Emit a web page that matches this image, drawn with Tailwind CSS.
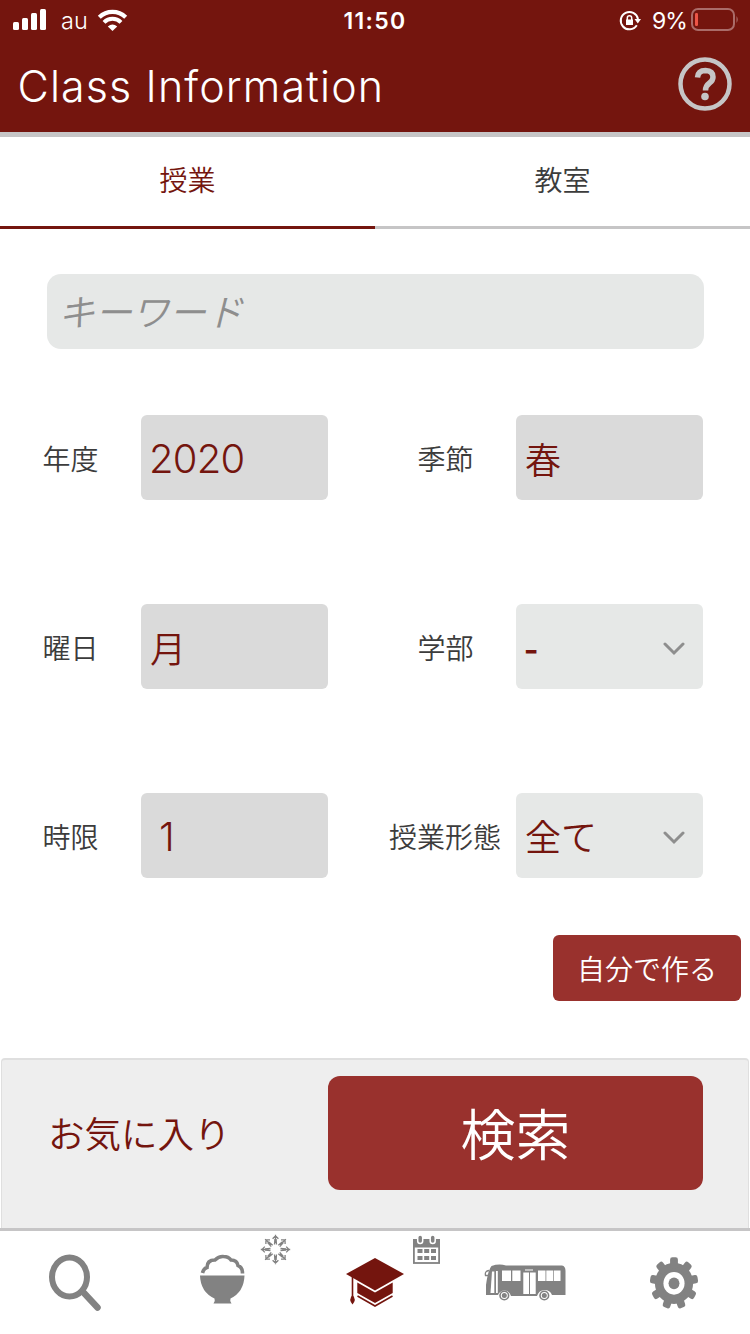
<!DOCTYPE html>
<html lang="ja">
<head>
<meta charset="utf-8">
<title>Class Information</title>
<script src="https://cdn.jsdelivr.net/npm/@tailwindcss/browser@4"></script>
</head>
<body class="w-[750px] h-[1334px] flex flex-col overflow-hidden bg-white font-[350] text-[#3c3c3c] font-['Noto_Sans_CJK_JP',sans-serif]">
<header class="h-[137px] shrink-0 bg-[#74150e] border-b-[5px] border-[#c6c5c6] flex flex-col text-white">
  <div class="h-10 flex items-center justify-between font-['Inter',sans-serif] font-normal">
    <div class="w-[250px] flex items-center">
      <svg class="w-[50px] h-10 shrink-0" viewBox="0 0 50 40" fill="#fff"><rect x="13" y="22" width="6" height="8" rx="1.5"/><rect x="22" y="18" width="6" height="12" rx="1.5"/><rect x="31" y="13" width="6" height="17" rx="1.5"/><rect x="40" y="9" width="6" height="21" rx="1.5"/></svg>
      <span class="w-[46px] pl-[11px] text-[23.5px] font-[350] leading-10 pt-[2px]">au</span>
      <svg class="w-[34px] h-10" viewBox="96 0 34 40" fill="none" stroke="#fff" stroke-width="4.2"><path d="M99.300 17.300A19 19 0 0 1 125.700 17.300"/><path d="M104 22.400A12 12 0 0 1 121 22.400" stroke-width="4"/><path d="M107.800 26.500Q112.500 22.600 117.200 26.500L112.500 31Z" fill="#fff" stroke="none"/></svg>
    </div>
    <span class="text-[23px] font-semibold tracking-[1.300px] leading-10 pt-[2px]">11:50</span>
    <div class="w-[250px] flex items-center justify-end">
      <svg class="w-[24px] h-10" viewBox="618 0 24 40" fill="none" stroke="#fff" stroke-width="2"><path d="M638 19A8.700 8.700 0 1 0 636.800 25.300"/><path d="M634.500 19h6.500l-3.200 4.500z" fill="#fff" stroke="none"/><rect x="626" y="19.500" width="7" height="5.500" fill="#fff" stroke="none"/><path d="M627.300 20v-2a2.200 2.200 0 0 1 4.400 0v2" stroke-width="1.500"/></svg>
      <span class="w-[49px] pl-[10px] text-[23px] leading-10 pt-[2px] whitespace-nowrap tracking-[-1px]">9%</span>
      <svg class="w-[59px] h-10" viewBox="691 0 59 40"><rect x="692" y="9" width="42" height="21" rx="6" fill="none" stroke="#aa6c69" stroke-width="2"/><rect x="695" y="13" width="3" height="13" rx="1.200" fill="#ec5547"/><path d="M736.500 16q2.500 3.500 0 7z" fill="#aa6c69"/></svg>
    </div>
  </div>
  <div class="flex-1 flex items-center justify-between pl-[17.5px] pr-[18px]">
    <h1 class="text-[43px] leading-none font-['Inter',sans-serif] font-light tracking-[1.100px] whitespace-nowrap">Class Information</h1>
    <svg class="w-[54px] h-[54px] -mt-1" viewBox="0 0 54 54" fill="none" stroke="#c6c5c6"><circle cx="27" cy="27" r="24.500" stroke-width="4.500"/><path d="M19.500 20.500Q20 13.500 27.500 13.500Q35 13.700 35 20Q35 23.500 31.500 26Q27.500 29 27.500 33.500" stroke-width="5.500"/><circle cx="27" cy="39.500" r="3.800" fill="#c6c5c6" stroke="none"/></svg>
  </div>
</header>
<nav class="h-[92px] shrink-0 grid grid-cols-2 text-[28px] text-center leading-[84px]">
  <div class="border-b-[3px] border-[#74150e] text-[#74150e]">授業</div>
  <div class="border-b-[3px] border-[#c6c5c6]">教室</div>
</nav>
<main class="h-[829px] shrink-0 pt-[45px] flex flex-col">
  <div class="ml-[47px] w-[657px] h-[75px] rounded-[14px] bg-[#e6e8e7] pl-[11px] text-[37px] leading-[73px] text-[#8e8e8e] italic">キーワード</div>
  <div class="mt-[66px] grid grid-cols-2 gap-y-[104px]">
    <div class="flex items-center h-[85px]"><div class="w-[141px] pr-[42.5px] text-right text-[28px]">年度</div><div class="w-[187px] h-[85px] rounded-[6px] bg-[#dadada] pl-[8px] text-[#74150e] text-[40px] leading-[87px] font-['Inter',sans-serif] font-[350] tracking-[-0.8px]">2020</div></div>
    <div class="flex items-center h-[85px]"><div class="w-[141px] pr-[42.5px] text-right text-[28px]">季節</div><div class="w-[187px] h-[85px] rounded-[6px] bg-[#dadada] pl-[9px] text-[#74150e] text-[36px] leading-[87px]">春</div></div>
    <div class="flex items-center h-[85px]"><div class="w-[141px] pr-[42.5px] text-right text-[28px]">曜日</div><div class="w-[187px] h-[85px] rounded-[6px] bg-[#dadada] pl-[9px] text-[#74150e] text-[36px] leading-[87px]">月</div></div>
    <div class="flex items-center h-[85px]"><div class="w-[141px] pr-[42.5px] text-right text-[28px]">学部</div><div class="w-[187px] h-[85px] rounded-[6px] bg-[#e6e8e7] pl-[8px] pr-[18px] text-[#74150e] text-[36px] leading-[87px] flex items-center justify-between"><span class="font-medium text-[40px]">-</span><svg class="w-[22px] h-[14px] mt-[4px]" viewBox="0 0 22 14" fill="none" stroke="#8e8e8e" stroke-width="3" stroke-linecap="round"><path d="M2 2L11 11L20 2"/></svg></div></div>
    <div class="flex items-center h-[85px]"><div class="w-[141px] pr-[42.5px] text-right text-[28px]">時限</div><div class="w-[187px] h-[85px] rounded-[6px] bg-[#dadada] pl-[18px] text-[#74150e] text-[40px] leading-[87px] font-['Inter',sans-serif] font-[350]">1</div></div>
    <div class="flex items-center h-[85px]"><div class="w-[141px] pr-[15px] text-right text-[28px] whitespace-nowrap">授業形態</div><div class="w-[187px] h-[85px] rounded-[6px] bg-[#e6e8e7] pl-[9px] pr-[18px] text-[#74150e] text-[36px] leading-[87px] flex items-center justify-between"><span>全て</span><svg class="w-[22px] h-[14px] mt-[4px]" viewBox="0 0 22 14" fill="none" stroke="#8e8e8e" stroke-width="3" stroke-linecap="round"><path d="M2 2L11 11L20 2"/></svg></div></div>
  </div>
  <div class="mt-[57px] mr-[9px] self-end w-[188px] h-[66px] rounded-[6px] bg-[#99312d] text-white text-[28px] leading-[66px] text-center">自分で作る</div>
</main>
<section class="mx-px h-[170px] shrink-0 rounded-t-[4px] border border-b-0 border-t-2 border-[#dfdfdf] bg-[#eee] flex pt-4 pl-[45px]">
  <div class="w-[281px] h-[114px] pl-px text-[36.500px] leading-[113px] text-[#74150e]">お気に入り</div>
  <div class="w-[375px] h-[114px] rounded-[12px] bg-[#99312d] text-white text-[55px] leading-[111px] text-center">検索</div>
</section>
<footer class="h-[106px] shrink-0 border-t-[3px] border-[#c6c5c6] flex">
  <svg class="w-[150px] h-[103px]" viewBox="0 1231 150 103" fill="none" stroke="#828282"><ellipse cx="69.500" cy="1277" rx="17.500" ry="19.500" stroke-width="6"/><path d="M84 1293L97.500 1307.500" stroke-width="6.500" stroke-linecap="round"/></svg>
  <svg class="w-[150px] h-[103px]" viewBox="150 1231 150 103" fill="none" stroke="#828282">
    <path d="M200 1275.500H244.500Q244 1292 230.500 1298.500Q229.500 1301 231.500 1303.500H213.500Q215.500 1301 214.500 1298.500Q200.500 1292 200 1275.500Z" fill="#828282" stroke="none"/>
    <path d="M202.500 1273Q203.500 1268.500 207 1267.500Q207 1260 215 1260Q219 1256 223.500 1256.500Q228.500 1256.500 231 1260Q237 1260 238 1265.500Q242.500 1267 242.500 1273.500" stroke-width="3.600"/>
    <g stroke-width="1.300"><g id="arm"><path d="M275.500 1243V1234.800M274.500 1244.500L274.900 1239M276.500 1244.500L276.100 1239M272.600 1238.800L275.500 1236L278.400 1238.800"/></g>
    <use href="#arm" transform="rotate(45 275.500 1249.500)"/><use href="#arm" transform="rotate(90 275.500 1249.500)"/><use href="#arm" transform="rotate(135 275.500 1249.500)"/><use href="#arm" transform="rotate(180 275.500 1249.500)"/><use href="#arm" transform="rotate(225 275.500 1249.500)"/><use href="#arm" transform="rotate(270 275.500 1249.500)"/><use href="#arm" transform="rotate(315 275.500 1249.500)"/></g>
  </svg>
  <svg class="w-[150px] h-[103px]" viewBox="300 1231 150 103" fill="#74150e">
    <path d="M375 1258L404 1274L375 1290.500L346 1274Z"/><path d="M357.300 1282.500L375 1292.500L392.700 1282.500V1293L375 1303L357.300 1293Z"/><path d="M357.500 1296L375 1306L392.500 1296" fill="none" stroke="#74150e" stroke-width="1.600"/><path d="M352.500 1277V1298" fill="none" stroke="#74150e" stroke-width="1.600"/><path d="M352.500 1295Q357 1299.500 352.500 1304.500Q348 1299.500 352.500 1295Z"/>
    <rect x="413.900" y="1240.500" width="25.200" height="22.500" fill="none" stroke="#828282" stroke-width="1.800"/><rect x="413" y="1239" width="27" height="8.500" fill="#828282"/>
    <g fill="#828282" stroke="#fff" stroke-width="1.500"><rect x="417.700" y="1235" width="5" height="8.500" rx="2.500"/><rect x="430.200" y="1235" width="5" height="8.500" rx="2.500"/></g>
    <g fill="#828282"><rect x="417.500" y="1249" width="5" height="4"/><rect x="424.200" y="1249" width="5" height="4"/><rect x="431" y="1249" width="5" height="4"/><rect x="417.500" y="1256" width="5" height="4"/><rect x="424.200" y="1256" width="5" height="4"/><rect x="431" y="1256" width="5" height="4"/></g>
  </svg>
  <svg class="w-[150px] h-[103px]" viewBox="450 1231 150 103" fill="#828282">
    <path d="M486 1295V1285Q488 1270 491.500 1266Q499 1263.500 506 1265.500H562Q565.500 1266 565.500 1271V1295H552Q550 1290 544.500 1290Q539 1290 537 1296H511Q509 1290.500 504.500 1290.500Q500 1290.500 498 1295Z"/>
    <path d="M489 1270.500Q484.500 1271 485.500 1275.500H488" fill="none" stroke="#828282" stroke-width="1.300"/>
    <g fill="#fff"><path d="M492 1271.500H494.300V1293H490.500Z"/><rect x="496" y="1271" width="1.800" height="22"/><rect x="502" y="1270.500" width="9" height="10.500"/><rect x="512.300" y="1270.500" width="8.200" height="10.500"/><rect x="523.300" y="1272.500" width="5.700" height="21.500"/><rect x="530" y="1272.500" width="5.700" height="21.500"/><rect x="525" y="1269.500" width="8" height="1"/><rect x="538" y="1270.500" width="7.500" height="10.500"/><rect x="546.300" y="1270.500" width="7" height="10.500"/><rect x="554" y="1270.500" width="6.500" height="10.500"/></g>
    <g stroke="#828282" stroke-width="1.600" fill="#fff"><circle cx="504.300" cy="1295.500" r="4.300"/><circle cx="544.300" cy="1295.500" r="4.300"/></g><circle cx="504.300" cy="1295.500" r="2.500"/><circle cx="544.300" cy="1295.500" r="2.500"/>
  </svg>
  <svg class="w-[150px] h-[103px]" viewBox="600 1231 150 103" fill="#828282">
    <g transform="translate(674 1283.300) scale(.91 .98)"><circle r="21"/><g><rect id="tooth" x="-4.300" y="-26.500" width="8.600" height="12" rx="2.500"/><use href="#tooth" transform="rotate(40)"/><use href="#tooth" transform="rotate(80)"/><use href="#tooth" transform="rotate(120)"/><use href="#tooth" transform="rotate(160)"/><use href="#tooth" transform="rotate(200)"/><use href="#tooth" transform="rotate(240)"/><use href="#tooth" transform="rotate(280)"/><use href="#tooth" transform="rotate(320)"/></g><circle r="11.600" fill="#fff"/><circle r="6"/></g>
  </svg>
</footer>
</body>
</html>
